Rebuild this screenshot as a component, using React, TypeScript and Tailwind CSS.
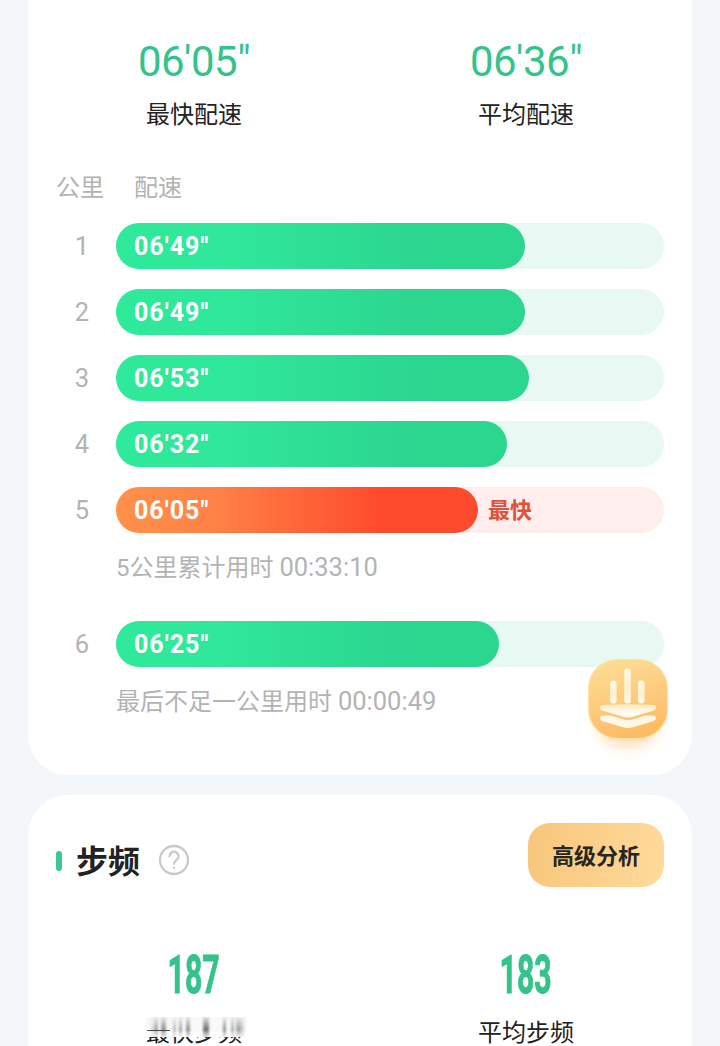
import React from "react";

type Split = { km: number; pace: string; width: number; top: string; fastest?: boolean; note?: string; time?: string };

const splits: Split[] = [
  { km: 1, pace: "06'49\"", width: 409, top: "mt-0" },
  { km: 2, pace: "06'49\"", width: 409, top: "mt-5" },
  { km: 3, pace: "06'53\"", width: 413, top: "mt-5" },
  { km: 4, pace: "06'32\"", width: 391, top: "mt-5" },
  { km: 5, pace: "06'05\"", width: 362, top: "mt-5", fastest: true, note: "5公里累计用时", time: "00:33:10" },
  { km: 6, pace: "06'25\"", width: 383, top: "mt-9", note: "最后不足一公里用时", time: "00:00:49" },
];

function Pace({ value, label }: { value: string; label: string }) {
  return (
    <div className="flex w-[332px] flex-col items-center">
      <div className="h-[50px] whitespace-nowrap text-[42px] leading-[50px] tracking-[-0.5px] text-[#34c38a]">{value}</div>
      <div className="mt-[12px] h-8 text-2xl leading-8 text-[#222]">{label}</div>
    </div>
  );
}

function SplitRow({ km, pace, width, top, fastest, note, time }: Split) {
  return (
    <div className={top}>
      <div className="flex h-[46px] items-center">
        <div className="ml-7 w-[52px] shrink-0 text-center text-[25.5px] leading-[46px] text-[#b3b3b3]">{km}</div>
        <div className={`ml-2 flex h-[46px] w-[548px] shrink-0 items-center rounded-full ${fastest ? "bg-[#ffeeed]" : "bg-[#e8f9f4]"}`}>
          <div
            className={`h-[46px] rounded-full pl-[18px] text-[25px] leading-[48px] font-bold tracking-[1px] text-white ${
              fastest
                ? "bg-[linear-gradient(90deg,#ff914a_0%,#ff8146_28%,#ff4b2d_73%,#ff4b2d_100%)]"
                : "bg-[linear-gradient(90deg,#2eea9b_0%,#30e79a_28%,#2cd690_73%,#2bd68f_100%)]"
            }`}
            style={{ width }}
          >
            {pace}
          </div>
          {fastest && <span className="ml-2.5 text-[22px] font-bold text-[#df5138]">最快</span>}
        </div>
      </div>
      {note && (
        <div className="mt-[17px] ml-[88px] h-[35px] whitespace-nowrap text-2xl leading-[35px] text-[#b3b3b3]">
          {note} <span className="text-[25.5px]">{time}</span>
        </div>
      )}
    </div>
  );
}

function ChartButton() {
  return (
    <svg className="absolute top-[648px] left-[568px] h-[120px] w-[120px]" viewBox="0 0 120 120">
      <defs>
        <linearGradient id="tile" x1="0.2" y1="0" x2="0.5" y2="1">
          <stop offset="0" stopColor="#fddd95" />
          <stop offset=".55" stopColor="#fdcb7d" />
          <stop offset="1" stopColor="#fdbb62" />
        </linearGradient>
        <linearGradient id="bar" x1="0" y1="0" x2="0" y2="1">
          <stop offset="0" stopColor="#fff9e8" />
          <stop offset=".6" stopColor="#fff0ca" />
          <stop offset="1" stopColor="#fffaf0" />
        </linearGradient>
        <linearGradient id="layer" x1="0" y1="0" x2="0" y2="1">
          <stop offset="0" stopColor="#ffe9bf" />
          <stop offset=".7" stopColor="#fffdf5" />
        </linearGradient>
        <filter id="glow" x="-50%" y="-50%" width="200%" height="200%">
          <feGaussianBlur stdDeviation="7" />
        </filter>
      </defs>
      <rect x="31" y="38" width="58" height="60" rx="24" fill="#ffac50" opacity=".45" filter="url(#glow)" />
      <rect x="20.5" y="11.5" width="79" height="79" rx="29" fill="url(#tile)" stroke="#fee2ac" strokeWidth="1.2" />
      <g fill="url(#bar)">
        <rect x="42" y="32.5" width="6.6" height="23" rx="3.3" />
        <rect x="56.2" y="20.5" width="6.6" height="35" rx="3.3" />
        <rect x="70" y="32.5" width="6.6" height="23" rx="3.3" />
      </g>
      <path d="M33 57 Q60 55.5 87 57 Q89.5 60 86 62.5 L64 69 Q60 70 56 69 L34 62.5 Q30.5 60 33 57Z" fill="url(#layer)" />
      <path d="M34 67.5 L42 67.5 L56 71.5 Q60 72.500 64 71.500 L78 67.500 L86 67.500 Q90 69.500 86 73 L64 79.500 Q60 80.500 56 79.500 L34 73 Q30 69.500 34 67.500Z" fill="#fff8e9" />
    </svg>
  );
}

function Cadence({ value, children }: { value: string; children: React.ReactNode }) {
  return (
    <div className="flex w-[332px] flex-col items-center">
      <div className="h-[62px] scale-x-[0.57] text-[53px] leading-[62px] font-bold text-[#34c38a] [-webkit-text-stroke:1px_#34c38a]">{value}</div>
      {children}
    </div>
  );
}

const streaks = [
  [151, 5, 0.2], [155, 3, 0.5], [161, 5, 0.6], [173, 3, 0.35], [179, 3, 0.5], [186, 4, 0.6],
  [203, 6, 0.8], [223, 3, 0.6], [231, 3, 0.45], [236, 5, 0.5], [241, 3, 0.25],
];

function FadingLabel() {
  return (
    <div className="relative mt-[14px] h-[26px] text-2xl leading-[26px] text-[#222]">
      <div className="[clip-path:inset(17px_0_0_0)]">最快步频</div>
      <svg className="absolute -top-2 -left-2 h-[26px] w-28" viewBox="138 1012 112 26">
        <defs>
          <linearGradient id="fade" x1="0" y1="1016" x2="0" y2="1038" gradientUnits="userSpaceOnUse">
            <stop offset="0" stopColor="#333" stopOpacity=".08" />
            <stop offset=".6" stopColor="#333" stopOpacity=".85" />
            <stop offset="1" stopColor="#333" stopOpacity=".1" />
          </linearGradient>
          <filter id="soft" x="-10%" y="-10%" width="120%" height="120%">
            <feGaussianBlur stdDeviation="0.8 0.3" />
          </filter>
        </defs>
        <path d="M146 1017H246V1032H146Z" fill="#333" opacity=".03" />
        <g filter="url(#soft)">
          {streaks.map(([x, w, o]) => (
            <rect key={x} x={x} y="1017" width={w} height="20" fill="url(#fade)" opacity={o} />
          ))}
        </g>
        <path d="M147 1030.5H170" stroke="#333" strokeWidth="1" opacity=".85" />
      </svg>
    </div>
  );
}

export default function App() {
  return (
    <main className="relative h-[1046px] w-[720px] overflow-hidden bg-[#f4f7f9] px-7 font-[Roboto,'Noto_Sans_CJK_SC',sans-serif]">
      <section className="h-[775px] rounded-b-[40px] bg-white pt-[37px]">
        <div className="flex">
          <Pace value={"06'05\""} label="最快配速" />
          <Pace value={"06'36\""} label="平均配速" />
        </div>
        <div className="mt-[39px] flex h-9 gap-[30px] pl-7 text-2xl leading-9 text-[#b3b3b3]">
          <span>公里</span>
          <span>配速</span>
        </div>
        <div className="mt-[17px]">
          {splits.map((s) => (
            <SplitRow key={s.km} {...s} />
          ))}
        </div>
      </section>
      <section className="mt-5 h-[251px] rounded-t-[40px] bg-white pt-7">
        <div className="flex h-16 items-center pr-7 pl-7">
          <div className="mt-3 h-5 w-1.5 rounded-full bg-[#3bc892]" />
          <h2 className="mt-[14px] ml-[14px] text-[32px] leading-[44px] font-bold text-[#222]">步频</h2>
          <svg className="mt-[10px] ml-[18px] h-8 w-8" viewBox="0 0 32 32" fill="none" stroke="#cacaca" strokeWidth="2.3" strokeLinecap="round" strokeLinejoin="round">
            <circle cx="16" cy="16" r="14" />
            <path d="M11.5 12.2a4.5 4.5 0 1 1 7.8 3.1c-1.6 1.7-3.3 2-3.3 4.5" />
            <path d="M16 23.7v.1" />
          </svg>
          <button className="ml-auto h-16 w-[136px] rounded-[22px] bg-[linear-gradient(100deg,#f8c67b,#ffda9b)] pt-0.5 text-[22px] font-bold text-[#28251f]">高级分析</button>
        </div>
        <div className="mt-[57px] flex">
          <Cadence value="187"><FadingLabel /></Cadence>
          <Cadence value="183"><div className="mt-[14px] h-[26px] text-2xl leading-[26px] text-[#222]">平均步频</div></Cadence>
        </div>
      </section>
      <ChartButton />
    </main>
  );
}
